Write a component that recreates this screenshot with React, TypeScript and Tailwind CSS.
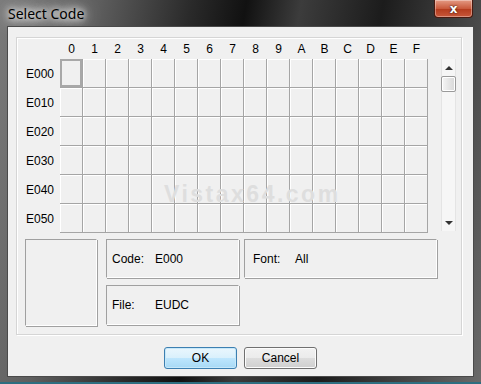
import React from "react";

const COLS = ["0", "1", "2", "3", "4", "5", "6", "7", "8", "9", "A", "B", "C", "D", "E", "F"];
const ROWS = ["E000", "E010", "E020", "E030", "E040", "E050"];

/* sunken static box used for Code / File / Font */
const InfoBox: React.FC<{ label: string; value: string; labelPad: string; valueLeft: string; className?: string }> = ({
  label,
  value,
  labelPad,
  valueLeft,
  className,
}) => (
  <div
    className={`relative flex items-center border-t border-l border-[#a0a0a0] border-r border-b border-r-white border-b-white shadow-[1px_1px_0_#a0a0a0] ${className ?? ""}`}
  >
    <span className={`absolute ${labelPad}`}>{label}</span>
    <span className={`absolute ${valueLeft}`}>{value}</span>
  </div>
);

export default function App() {
  return (
    <div className="relative flex h-[384px] w-[481px] flex-col bg-[linear-gradient(100deg,#7a7a7a_0%,#5e5e5e_18%,#2a2a2a_35%,#111_45%,#3c3c3c_55%,#1c1c1c_70%,#4a4a4a_88%,#6a6a6a_100%)] font-['Liberation_Sans',sans-serif] text-[12px] text-black">
      {/* TITLE BAR */}
      <div className="flex h-[27px] items-center pl-[8px]">
        <span className="font-['Noto_Sans',sans-serif] text-[14px] leading-none text-black [text-shadow:0_0_6px_#fff,0_0_10px_#fff,0_0_16px_#eee,0_0_22px_#ccc]">
          Select Code
        </span>
      </div>

      {/* CLOSE BUTTON */}
      <div className="absolute right-[8px] top-0 flex h-[18px] w-[39px] items-center justify-center rounded-b-[4px] border border-t-0 border-[#4a1a10] bg-[linear-gradient(#e49a84,#c95a3c_50%,#b33a1c_51%,#c8573a)] shadow-[inset_0_0_0_1px_rgba(255,255,255,0.35)]">
        <span className="font-['DejaVu_Sans',sans-serif] text-[12px] font-bold leading-none text-white [text-shadow:0_0_2px_#000]">
          x
        </span>
      </div>

      {/* CLIENT AREA */}
      <div className="mx-[8px] flex h-[349px] flex-col bg-[#f0f0f0] shadow-[0_0_0_1px_#4a4a4a]">
        {/* MAIN PANEL */}
        <div className="relative ml-[8px] mt-[10px] flex h-[298px] w-[446px] flex-col border border-[#d5d5d5] shadow-[inset_1px_1px_0_#fff,1px_1px_0_#fff]">
          {/* column headers */}
          <div className="flex h-[21px] items-center pl-[43px]">
            {COLS.map((c) => (
              <div key={c} className="w-[23px] text-center leading-none">
                {c}
              </div>
            ))}
          </div>

          <div className="flex">
            {/* row labels */}
            <div className="flex w-[43px] flex-col">
              {ROWS.map((r) => (
                <div key={r} className="flex h-[29px] items-center pl-[9px]">
                  {r}
                </div>
              ))}
            </div>

            {/* code grid */}
            <div className="grid w-[368px] grid-cols-[repeat(16,23px)] grid-rows-[repeat(6,29px)]">
              {ROWS.map((r, ri) =>
                COLS.map((c, ci) => (
                  <div
                    key={r + c}
                    className="border-b border-r border-[#a5a5a5] shadow-[inset_1px_1px_0_#fff]"
                  >
                    {ri === 0 && ci === 0 && (
                      <div className="h-full w-full border-2 border-[#a8a8a8]" />
                    )}
                  </div>
                ))
              )}
            </div>

            {/* scrollbar */}
            <div className="ml-[13px] flex h-[172px] w-[15px] flex-col border-x border-[#e4e4e4] bg-[#f6f6f6]">
              <div className="flex h-[17px] items-center justify-center">
                <div className="h-0 w-0 border-x-[4px] border-b-[4px] border-x-transparent border-b-[#333]" />
              </div>
              <div className="mx-[-1px] h-[16px] rounded-[2px] border border-[#9a9a9a] bg-[linear-gradient(90deg,#f6f6f6,#e6e6e6_50%,#d8d8d8)] shadow-[inset_0_0_0_1px_#fff]" />
              <div className="flex-1" />
              <div className="flex h-[17px] items-center justify-center">
                <div className="h-0 w-0 border-x-[4px] border-t-[4px] border-x-transparent border-t-[#333]" />
              </div>
            </div>
          </div>

          {/* watermark */}
          <div className="pointer-events-none absolute left-[147px] top-[145px] text-[23px] font-bold leading-none tracking-[2.5px] text-[#dedede]">
            Vistax64.com
          </div>

          {/* bottom boxes */}
          <div className="mt-[6px] flex">
            <div className="ml-[8px] h-[87px] w-[72px] border-t border-l border-[#a0a0a0] border-r border-b border-r-white border-b-white shadow-[1px_1px_0_#a0a0a0]" />
            <div className="ml-[9px] flex flex-col gap-[7px]">
              <InfoBox label="Code:" value="E000" labelPad="left-[5px]" valueLeft="left-[48px]" className="h-[39px] w-[133px]" />
              <InfoBox label="File:" value="EUDC" labelPad="left-[5px]" valueLeft="left-[48px]" className="h-[40px] w-[133px]" />
            </div>
            <InfoBox label="Font:" value="All" labelPad="left-[8px]" valueLeft="left-[50px]" className="ml-[5px] h-[39px] w-[193px]" />
          </div>
        </div>

        {/* BUTTONS */}
        <div className="mt-[12px] flex justify-center gap-[7px]">
          <button className="h-[22px] w-[73px] rounded-[3px] border border-[#3c7fb1] bg-[linear-gradient(#eaf6fd,#d9f0fc_50%,#bee6fd_51%,#a7d9f5)] shadow-[inset_0_0_0_1px_#c7e8f9] text-[12px]">
            OK
          </button>
          <button className="h-[22px] w-[73px] rounded-[3px] border border-[#707070] bg-[linear-gradient(#f2f2f2,#ebebeb_50%,#dddddd_51%,#cfcfcf)] shadow-[inset_0_0_0_1px_#fcfcfc] text-[12px]">
            Cancel
          </button>
        </div>
      </div>

      {/* bottom frame edge */}
      <div className="mt-auto h-[2px] bg-[#2e6e80]" />
    </div>
  );
}
